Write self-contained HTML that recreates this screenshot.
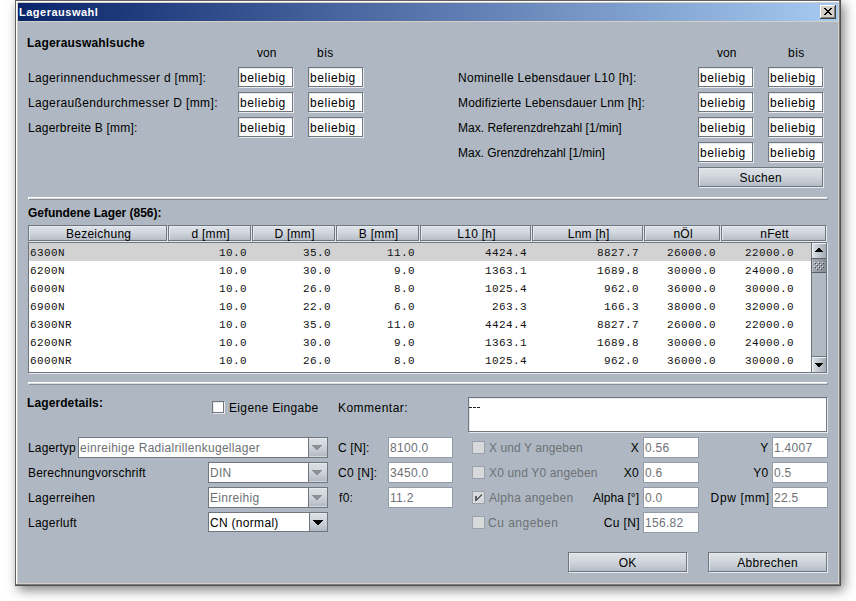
<!DOCTYPE html><html><head><meta charset="utf-8"><style>
html,body{margin:0;padding:0;background:#fff;width:856px;height:601px;overflow:hidden}
div{position:absolute;box-sizing:border-box}
svg{position:absolute}
</style></head><body>
<div style="left:15px;top:0px;width:826px;height:586px;box-shadow:3px 4px 11px rgba(0,0,0,0.5);background:#404040;"></div>
<div style="left:15px;top:0px;width:826px;height:586px;background:#505050;"></div>
<div style="left:15px;top:0px;width:825px;height:585px;background:#606060;"></div>
<div style="left:16px;top:1px;width:824px;height:584px;background:#7c7c7c;"></div>
<div style="left:16px;top:1px;width:823px;height:583px;background:#ffffff;"></div>
<div style="left:17px;top:2px;width:822px;height:582px;background:#d4d0c8;"></div>
<div style="left:18px;top:3px;width:820px;height:18px;background:linear-gradient(to right,#0a246a,#a6caf0);"></div>
<div style="left:19px;top:5px;font-family:'Liberation Sans', sans-serif;font-size:11px;font-weight:bold;line-height:15px;color:#fff;white-space:pre;letter-spacing:0.5px">Lagerauswahl</div>
<div style="left:820px;top:5px;width:16px;height:14px;background:#404040;"></div>
<div style="left:820px;top:5px;width:15px;height:13px;background:#ffffff;"></div>
<div style="left:821px;top:6px;width:14px;height:12px;background:#808080;"></div>
<div style="left:821px;top:6px;width:13px;height:11px;background:#d4d0c8;"></div>
<svg style="left:824px;top:8px" width="8" height="7" viewBox="0 0 8 7" shape-rendering="crispEdges"><path d="M0 0h2v1h-2zM6 0h2v1h-2zM1 1h2v1h-2zM5 1h2v1h-2zM2 2h4v1h-4zM3 3h2v1h-2zM2 4h4v1h-4zM1 5h2v1h-2zM5 5h2v1h-2zM0 6h2v1h-2zM6 6h2v1h-2z" fill="#000"/></svg>
<div style="left:18px;top:22px;width:820px;height:561px;background:#afb8c2;"></div>
<div style="left:27px;top:36px;font-family:'Liberation Sans', sans-serif;font-size:12px;line-height:15px;color:#000;white-space:pre;font-weight:bold;letter-spacing:0.19px;">Lagerauswahlsuche</div>
<div style="left:257px;top:46px;font-family:'Liberation Sans', sans-serif;font-size:12px;line-height:15px;color:#000;white-space:pre;letter-spacing:0.1px;">von</div>
<div style="left:317px;top:46px;font-family:'Liberation Sans', sans-serif;font-size:12px;line-height:15px;color:#000;white-space:pre;letter-spacing:0.5px;">bis</div>
<div style="left:717px;top:46px;font-family:'Liberation Sans', sans-serif;font-size:12px;line-height:15px;color:#000;white-space:pre;letter-spacing:0.1px;">von</div>
<div style="left:788px;top:46px;font-family:'Liberation Sans', sans-serif;font-size:12px;line-height:15px;color:#000;white-space:pre;letter-spacing:0.5px;">bis</div>
<div style="left:28px;top:71px;font-family:'Liberation Sans', sans-serif;font-size:12px;line-height:15px;color:#000;white-space:pre;letter-spacing:0.34px;">Lagerinnenduchmesser d [mm]:</div>
<div style="left:239px;top:68px;width:55px;height:20px;border:1px solid #e6e9ed;background:#fff;"></div>
<div style="left:238px;top:67px;width:55px;height:20px;border:1px solid #6f767e;"></div>
<div style="left:240px;top:71px;font-family:'Liberation Sans', sans-serif;font-size:12px;line-height:15px;color:#000;white-space:pre;letter-spacing:0.56px;">beliebig</div>
<div style="left:309px;top:68px;width:55px;height:20px;border:1px solid #e6e9ed;background:#fff;"></div>
<div style="left:308px;top:67px;width:55px;height:20px;border:1px solid #6f767e;"></div>
<div style="left:310px;top:71px;font-family:'Liberation Sans', sans-serif;font-size:12px;line-height:15px;color:#000;white-space:pre;letter-spacing:0.56px;">beliebig</div>
<div style="left:28px;top:96px;font-family:'Liberation Sans', sans-serif;font-size:12px;line-height:15px;color:#000;white-space:pre;letter-spacing:0.36px;">Lageraußendurchmesser D [mm]:</div>
<div style="left:239px;top:93px;width:55px;height:20px;border:1px solid #e6e9ed;background:#fff;"></div>
<div style="left:238px;top:92px;width:55px;height:20px;border:1px solid #6f767e;"></div>
<div style="left:240px;top:96px;font-family:'Liberation Sans', sans-serif;font-size:12px;line-height:15px;color:#000;white-space:pre;letter-spacing:0.56px;">beliebig</div>
<div style="left:309px;top:93px;width:55px;height:20px;border:1px solid #e6e9ed;background:#fff;"></div>
<div style="left:308px;top:92px;width:55px;height:20px;border:1px solid #6f767e;"></div>
<div style="left:310px;top:96px;font-family:'Liberation Sans', sans-serif;font-size:12px;line-height:15px;color:#000;white-space:pre;letter-spacing:0.56px;">beliebig</div>
<div style="left:28px;top:121px;font-family:'Liberation Sans', sans-serif;font-size:12px;line-height:15px;color:#000;white-space:pre;letter-spacing:0.22px;">Lagerbreite B [mm]:</div>
<div style="left:239px;top:118px;width:55px;height:20px;border:1px solid #e6e9ed;background:#fff;"></div>
<div style="left:238px;top:117px;width:55px;height:20px;border:1px solid #6f767e;"></div>
<div style="left:240px;top:121px;font-family:'Liberation Sans', sans-serif;font-size:12px;line-height:15px;color:#000;white-space:pre;letter-spacing:0.56px;">beliebig</div>
<div style="left:309px;top:118px;width:55px;height:20px;border:1px solid #e6e9ed;background:#fff;"></div>
<div style="left:308px;top:117px;width:55px;height:20px;border:1px solid #6f767e;"></div>
<div style="left:310px;top:121px;font-family:'Liberation Sans', sans-serif;font-size:12px;line-height:15px;color:#000;white-space:pre;letter-spacing:0.56px;">beliebig</div>
<div style="left:458px;top:71px;font-family:'Liberation Sans', sans-serif;font-size:12px;line-height:15px;color:#000;white-space:pre;letter-spacing:0.28px;">Nominelle Lebensdauer L10 [h]:</div>
<div style="left:699px;top:68px;width:55px;height:20px;border:1px solid #e6e9ed;background:#fff;"></div>
<div style="left:698px;top:67px;width:55px;height:20px;border:1px solid #6f767e;"></div>
<div style="left:700px;top:71px;font-family:'Liberation Sans', sans-serif;font-size:12px;line-height:15px;color:#000;white-space:pre;letter-spacing:0.56px;">beliebig</div>
<div style="left:769px;top:68px;width:55px;height:20px;border:1px solid #e6e9ed;background:#fff;"></div>
<div style="left:768px;top:67px;width:55px;height:20px;border:1px solid #6f767e;"></div>
<div style="left:770px;top:71px;font-family:'Liberation Sans', sans-serif;font-size:12px;line-height:15px;color:#000;white-space:pre;letter-spacing:0.56px;">beliebig</div>
<div style="left:458px;top:96px;font-family:'Liberation Sans', sans-serif;font-size:12px;line-height:15px;color:#000;white-space:pre;letter-spacing:0.17px;">Modifizierte Lebensdauer Lnm [h]:</div>
<div style="left:699px;top:93px;width:55px;height:20px;border:1px solid #e6e9ed;background:#fff;"></div>
<div style="left:698px;top:92px;width:55px;height:20px;border:1px solid #6f767e;"></div>
<div style="left:700px;top:96px;font-family:'Liberation Sans', sans-serif;font-size:12px;line-height:15px;color:#000;white-space:pre;letter-spacing:0.56px;">beliebig</div>
<div style="left:769px;top:93px;width:55px;height:20px;border:1px solid #e6e9ed;background:#fff;"></div>
<div style="left:768px;top:92px;width:55px;height:20px;border:1px solid #6f767e;"></div>
<div style="left:770px;top:96px;font-family:'Liberation Sans', sans-serif;font-size:12px;line-height:15px;color:#000;white-space:pre;letter-spacing:0.56px;">beliebig</div>
<div style="left:458px;top:121px;font-family:'Liberation Sans', sans-serif;font-size:12px;line-height:15px;color:#000;white-space:pre;letter-spacing:0.01px;">Max. Referenzdrehzahl [1/min]</div>
<div style="left:699px;top:118px;width:55px;height:20px;border:1px solid #e6e9ed;background:#fff;"></div>
<div style="left:698px;top:117px;width:55px;height:20px;border:1px solid #6f767e;"></div>
<div style="left:700px;top:121px;font-family:'Liberation Sans', sans-serif;font-size:12px;line-height:15px;color:#000;white-space:pre;letter-spacing:0.56px;">beliebig</div>
<div style="left:769px;top:118px;width:55px;height:20px;border:1px solid #e6e9ed;background:#fff;"></div>
<div style="left:768px;top:117px;width:55px;height:20px;border:1px solid #6f767e;"></div>
<div style="left:770px;top:121px;font-family:'Liberation Sans', sans-serif;font-size:12px;line-height:15px;color:#000;white-space:pre;letter-spacing:0.56px;">beliebig</div>
<div style="left:458px;top:146px;font-family:'Liberation Sans', sans-serif;font-size:12px;line-height:15px;color:#000;white-space:pre;letter-spacing:-0.02px;">Max. Grenzdrehzahl [1/min]</div>
<div style="left:699px;top:143px;width:55px;height:20px;border:1px solid #e6e9ed;background:#fff;"></div>
<div style="left:698px;top:142px;width:55px;height:20px;border:1px solid #6f767e;"></div>
<div style="left:700px;top:146px;font-family:'Liberation Sans', sans-serif;font-size:12px;line-height:15px;color:#000;white-space:pre;letter-spacing:0.56px;">beliebig</div>
<div style="left:769px;top:143px;width:55px;height:20px;border:1px solid #e6e9ed;background:#fff;"></div>
<div style="left:768px;top:142px;width:55px;height:20px;border:1px solid #6f767e;"></div>
<div style="left:770px;top:146px;font-family:'Liberation Sans', sans-serif;font-size:12px;line-height:15px;color:#000;white-space:pre;letter-spacing:0.56px;">beliebig</div>
<div style="left:699px;top:168px;width:125px;height:20px;border:1px solid #e6e9ed;background:linear-gradient(#dce1e7,#d2d8de 35%,#c2c9d1 70%,#b0b7c0);"></div>
<div style="left:698px;top:167px;width:125px;height:20px;border:1px solid #6f767e;"></div>
<div style="left:698px;top:171px;width:125px;text-align:center;font-family:'Liberation Sans', sans-serif;font-size:12px;line-height:15px;color:#000;white-space:pre;letter-spacing:0.3px;text-indent:0.3px;">Suchen</div>
<div style="left:28px;top:197px;width:800px;height:3px;background:#d9dee3;border-top:1px solid #fff;border-left:1px solid #fff;border-bottom:1px solid #868d95;border-right:1px solid #868d95;"></div>
<div style="left:28px;top:206px;font-family:'Liberation Sans', sans-serif;font-size:12px;line-height:15px;color:#000;white-space:pre;font-weight:bold;letter-spacing:-0.03px;">Gefundene Lager (856):</div>
<div style="left:29px;top:243px;width:799px;height:131px;background:#e6e9ed;"></div>
<div style="left:28px;top:242px;width:799px;height:131px;background:#6f767e;"></div>
<div style="left:29px;top:226px;width:139px;height:16px;border:1px solid #e6e9ed;background:linear-gradient(#dce1e7,#d2d8de 35%,#c2c9d1 70%,#b0b7c0);"></div>
<div style="left:28px;top:225px;width:139px;height:16px;border:1px solid #6f767e;"></div>
<div style="left:29px;top:227px;width:139px;text-align:center;font-family:'Liberation Sans', sans-serif;font-size:12px;line-height:15px;color:#000;white-space:pre;letter-spacing:0.26px;text-indent:0.26px;">Bezeichung</div>
<div style="left:169px;top:226px;width:83px;height:16px;border:1px solid #e6e9ed;background:linear-gradient(#dce1e7,#d2d8de 35%,#c2c9d1 70%,#b0b7c0);"></div>
<div style="left:168px;top:225px;width:83px;height:16px;border:1px solid #6f767e;"></div>
<div style="left:169px;top:227px;width:83px;text-align:center;font-family:'Liberation Sans', sans-serif;font-size:12px;line-height:15px;color:#000;white-space:pre;letter-spacing:0.26px;text-indent:0.26px;">d [mm]</div>
<div style="left:253px;top:226px;width:83px;height:16px;border:1px solid #e6e9ed;background:linear-gradient(#dce1e7,#d2d8de 35%,#c2c9d1 70%,#b0b7c0);"></div>
<div style="left:252px;top:225px;width:83px;height:16px;border:1px solid #6f767e;"></div>
<div style="left:253px;top:227px;width:83px;text-align:center;font-family:'Liberation Sans', sans-serif;font-size:12px;line-height:15px;color:#000;white-space:pre;letter-spacing:0.26px;text-indent:0.26px;">D [mm]</div>
<div style="left:337px;top:226px;width:83px;height:16px;border:1px solid #e6e9ed;background:linear-gradient(#dce1e7,#d2d8de 35%,#c2c9d1 70%,#b0b7c0);"></div>
<div style="left:336px;top:225px;width:83px;height:16px;border:1px solid #6f767e;"></div>
<div style="left:337px;top:227px;width:83px;text-align:center;font-family:'Liberation Sans', sans-serif;font-size:12px;line-height:15px;color:#000;white-space:pre;letter-spacing:0.26px;text-indent:0.26px;">B [mm]</div>
<div style="left:421px;top:226px;width:111px;height:16px;border:1px solid #e6e9ed;background:linear-gradient(#dce1e7,#d2d8de 35%,#c2c9d1 70%,#b0b7c0);"></div>
<div style="left:420px;top:225px;width:111px;height:16px;border:1px solid #6f767e;"></div>
<div style="left:421px;top:227px;width:111px;text-align:center;font-family:'Liberation Sans', sans-serif;font-size:12px;line-height:15px;color:#000;white-space:pre;letter-spacing:0.26px;text-indent:0.26px;">L10 [h]</div>
<div style="left:533px;top:226px;width:111px;height:16px;border:1px solid #e6e9ed;background:linear-gradient(#dce1e7,#d2d8de 35%,#c2c9d1 70%,#b0b7c0);"></div>
<div style="left:532px;top:225px;width:111px;height:16px;border:1px solid #6f767e;"></div>
<div style="left:533px;top:227px;width:111px;text-align:center;font-family:'Liberation Sans', sans-serif;font-size:12px;line-height:15px;color:#000;white-space:pre;letter-spacing:0.26px;text-indent:0.26px;">Lnm [h]</div>
<div style="left:645px;top:226px;width:76px;height:16px;border:1px solid #e6e9ed;background:linear-gradient(#dce1e7,#d2d8de 35%,#c2c9d1 70%,#b0b7c0);"></div>
<div style="left:644px;top:225px;width:76px;height:16px;border:1px solid #6f767e;"></div>
<div style="left:645px;top:227px;width:76px;text-align:center;font-family:'Liberation Sans', sans-serif;font-size:12px;line-height:15px;color:#000;white-space:pre;letter-spacing:0.26px;text-indent:0.26px;">nÖl</div>
<div style="left:722px;top:226px;width:105px;height:16px;border:1px solid #e6e9ed;background:linear-gradient(#dce1e7,#d2d8de 35%,#c2c9d1 70%,#b0b7c0);"></div>
<div style="left:721px;top:225px;width:105px;height:16px;border:1px solid #6f767e;"></div>
<div style="left:722px;top:227px;width:105px;text-align:center;font-family:'Liberation Sans', sans-serif;font-size:12px;line-height:15px;color:#000;white-space:pre;letter-spacing:0.26px;text-indent:0.26px;">nFett</div>
<div style="left:29px;top:243px;width:782px;height:129px;background:#fff;"></div>
<div style="left:29px;top:243px;width:782px;height:18px;background:#d2d2d2;"></div>
<div style="left:30px;top:247px;width:35px;font-family:'Liberation Mono', monospace;font-size:11px;letter-spacing:0.4px;line-height:13px;color:#111;white-space:pre;">6300N</div>
<div style="left:219px;top:247px;width:28px;font-family:'Liberation Mono', monospace;font-size:11px;letter-spacing:0.4px;line-height:13px;color:#111;white-space:pre;">10.0</div>
<div style="left:303px;top:247px;width:28px;font-family:'Liberation Mono', monospace;font-size:11px;letter-spacing:0.4px;line-height:13px;color:#111;white-space:pre;">35.0</div>
<div style="left:387px;top:247px;width:28px;font-family:'Liberation Mono', monospace;font-size:11px;letter-spacing:0.4px;line-height:13px;color:#111;white-space:pre;">11.0</div>
<div style="left:485px;top:247px;width:42px;font-family:'Liberation Mono', monospace;font-size:11px;letter-spacing:0.4px;line-height:13px;color:#111;white-space:pre;">4424.4</div>
<div style="left:597px;top:247px;width:42px;font-family:'Liberation Mono', monospace;font-size:11px;letter-spacing:0.4px;line-height:13px;color:#111;white-space:pre;">8827.7</div>
<div style="left:667px;top:247px;width:49px;font-family:'Liberation Mono', monospace;font-size:11px;letter-spacing:0.4px;line-height:13px;color:#111;white-space:pre;">26000.0</div>
<div style="left:745px;top:247px;width:49px;font-family:'Liberation Mono', monospace;font-size:11px;letter-spacing:0.4px;line-height:13px;color:#111;white-space:pre;">22000.0</div>
<div style="left:30px;top:265px;width:35px;font-family:'Liberation Mono', monospace;font-size:11px;letter-spacing:0.4px;line-height:13px;color:#111;white-space:pre;">6200N</div>
<div style="left:219px;top:265px;width:28px;font-family:'Liberation Mono', monospace;font-size:11px;letter-spacing:0.4px;line-height:13px;color:#111;white-space:pre;">10.0</div>
<div style="left:303px;top:265px;width:28px;font-family:'Liberation Mono', monospace;font-size:11px;letter-spacing:0.4px;line-height:13px;color:#111;white-space:pre;">30.0</div>
<div style="left:394px;top:265px;width:21px;font-family:'Liberation Mono', monospace;font-size:11px;letter-spacing:0.4px;line-height:13px;color:#111;white-space:pre;">9.0</div>
<div style="left:485px;top:265px;width:42px;font-family:'Liberation Mono', monospace;font-size:11px;letter-spacing:0.4px;line-height:13px;color:#111;white-space:pre;">1363.1</div>
<div style="left:597px;top:265px;width:42px;font-family:'Liberation Mono', monospace;font-size:11px;letter-spacing:0.4px;line-height:13px;color:#111;white-space:pre;">1689.8</div>
<div style="left:667px;top:265px;width:49px;font-family:'Liberation Mono', monospace;font-size:11px;letter-spacing:0.4px;line-height:13px;color:#111;white-space:pre;">30000.0</div>
<div style="left:745px;top:265px;width:49px;font-family:'Liberation Mono', monospace;font-size:11px;letter-spacing:0.4px;line-height:13px;color:#111;white-space:pre;">24000.0</div>
<div style="left:30px;top:283px;width:35px;font-family:'Liberation Mono', monospace;font-size:11px;letter-spacing:0.4px;line-height:13px;color:#111;white-space:pre;">6000N</div>
<div style="left:219px;top:283px;width:28px;font-family:'Liberation Mono', monospace;font-size:11px;letter-spacing:0.4px;line-height:13px;color:#111;white-space:pre;">10.0</div>
<div style="left:303px;top:283px;width:28px;font-family:'Liberation Mono', monospace;font-size:11px;letter-spacing:0.4px;line-height:13px;color:#111;white-space:pre;">26.0</div>
<div style="left:394px;top:283px;width:21px;font-family:'Liberation Mono', monospace;font-size:11px;letter-spacing:0.4px;line-height:13px;color:#111;white-space:pre;">8.0</div>
<div style="left:485px;top:283px;width:42px;font-family:'Liberation Mono', monospace;font-size:11px;letter-spacing:0.4px;line-height:13px;color:#111;white-space:pre;">1025.4</div>
<div style="left:604px;top:283px;width:35px;font-family:'Liberation Mono', monospace;font-size:11px;letter-spacing:0.4px;line-height:13px;color:#111;white-space:pre;">962.0</div>
<div style="left:667px;top:283px;width:49px;font-family:'Liberation Mono', monospace;font-size:11px;letter-spacing:0.4px;line-height:13px;color:#111;white-space:pre;">36000.0</div>
<div style="left:745px;top:283px;width:49px;font-family:'Liberation Mono', monospace;font-size:11px;letter-spacing:0.4px;line-height:13px;color:#111;white-space:pre;">30000.0</div>
<div style="left:30px;top:301px;width:35px;font-family:'Liberation Mono', monospace;font-size:11px;letter-spacing:0.4px;line-height:13px;color:#111;white-space:pre;">6900N</div>
<div style="left:219px;top:301px;width:28px;font-family:'Liberation Mono', monospace;font-size:11px;letter-spacing:0.4px;line-height:13px;color:#111;white-space:pre;">10.0</div>
<div style="left:303px;top:301px;width:28px;font-family:'Liberation Mono', monospace;font-size:11px;letter-spacing:0.4px;line-height:13px;color:#111;white-space:pre;">22.0</div>
<div style="left:394px;top:301px;width:21px;font-family:'Liberation Mono', monospace;font-size:11px;letter-spacing:0.4px;line-height:13px;color:#111;white-space:pre;">6.0</div>
<div style="left:492px;top:301px;width:35px;font-family:'Liberation Mono', monospace;font-size:11px;letter-spacing:0.4px;line-height:13px;color:#111;white-space:pre;">263.3</div>
<div style="left:604px;top:301px;width:35px;font-family:'Liberation Mono', monospace;font-size:11px;letter-spacing:0.4px;line-height:13px;color:#111;white-space:pre;">166.3</div>
<div style="left:667px;top:301px;width:49px;font-family:'Liberation Mono', monospace;font-size:11px;letter-spacing:0.4px;line-height:13px;color:#111;white-space:pre;">38000.0</div>
<div style="left:745px;top:301px;width:49px;font-family:'Liberation Mono', monospace;font-size:11px;letter-spacing:0.4px;line-height:13px;color:#111;white-space:pre;">32000.0</div>
<div style="left:30px;top:319px;width:42px;font-family:'Liberation Mono', monospace;font-size:11px;letter-spacing:0.4px;line-height:13px;color:#111;white-space:pre;">6300NR</div>
<div style="left:219px;top:319px;width:28px;font-family:'Liberation Mono', monospace;font-size:11px;letter-spacing:0.4px;line-height:13px;color:#111;white-space:pre;">10.0</div>
<div style="left:303px;top:319px;width:28px;font-family:'Liberation Mono', monospace;font-size:11px;letter-spacing:0.4px;line-height:13px;color:#111;white-space:pre;">35.0</div>
<div style="left:387px;top:319px;width:28px;font-family:'Liberation Mono', monospace;font-size:11px;letter-spacing:0.4px;line-height:13px;color:#111;white-space:pre;">11.0</div>
<div style="left:485px;top:319px;width:42px;font-family:'Liberation Mono', monospace;font-size:11px;letter-spacing:0.4px;line-height:13px;color:#111;white-space:pre;">4424.4</div>
<div style="left:597px;top:319px;width:42px;font-family:'Liberation Mono', monospace;font-size:11px;letter-spacing:0.4px;line-height:13px;color:#111;white-space:pre;">8827.7</div>
<div style="left:667px;top:319px;width:49px;font-family:'Liberation Mono', monospace;font-size:11px;letter-spacing:0.4px;line-height:13px;color:#111;white-space:pre;">26000.0</div>
<div style="left:745px;top:319px;width:49px;font-family:'Liberation Mono', monospace;font-size:11px;letter-spacing:0.4px;line-height:13px;color:#111;white-space:pre;">22000.0</div>
<div style="left:30px;top:337px;width:42px;font-family:'Liberation Mono', monospace;font-size:11px;letter-spacing:0.4px;line-height:13px;color:#111;white-space:pre;">6200NR</div>
<div style="left:219px;top:337px;width:28px;font-family:'Liberation Mono', monospace;font-size:11px;letter-spacing:0.4px;line-height:13px;color:#111;white-space:pre;">10.0</div>
<div style="left:303px;top:337px;width:28px;font-family:'Liberation Mono', monospace;font-size:11px;letter-spacing:0.4px;line-height:13px;color:#111;white-space:pre;">30.0</div>
<div style="left:394px;top:337px;width:21px;font-family:'Liberation Mono', monospace;font-size:11px;letter-spacing:0.4px;line-height:13px;color:#111;white-space:pre;">9.0</div>
<div style="left:485px;top:337px;width:42px;font-family:'Liberation Mono', monospace;font-size:11px;letter-spacing:0.4px;line-height:13px;color:#111;white-space:pre;">1363.1</div>
<div style="left:597px;top:337px;width:42px;font-family:'Liberation Mono', monospace;font-size:11px;letter-spacing:0.4px;line-height:13px;color:#111;white-space:pre;">1689.8</div>
<div style="left:667px;top:337px;width:49px;font-family:'Liberation Mono', monospace;font-size:11px;letter-spacing:0.4px;line-height:13px;color:#111;white-space:pre;">30000.0</div>
<div style="left:745px;top:337px;width:49px;font-family:'Liberation Mono', monospace;font-size:11px;letter-spacing:0.4px;line-height:13px;color:#111;white-space:pre;">24000.0</div>
<div style="left:30px;top:355px;width:42px;font-family:'Liberation Mono', monospace;font-size:11px;letter-spacing:0.4px;line-height:13px;color:#111;white-space:pre;">6000NR</div>
<div style="left:219px;top:355px;width:28px;font-family:'Liberation Mono', monospace;font-size:11px;letter-spacing:0.4px;line-height:13px;color:#111;white-space:pre;">10.0</div>
<div style="left:303px;top:355px;width:28px;font-family:'Liberation Mono', monospace;font-size:11px;letter-spacing:0.4px;line-height:13px;color:#111;white-space:pre;">26.0</div>
<div style="left:394px;top:355px;width:21px;font-family:'Liberation Mono', monospace;font-size:11px;letter-spacing:0.4px;line-height:13px;color:#111;white-space:pre;">8.0</div>
<div style="left:485px;top:355px;width:42px;font-family:'Liberation Mono', monospace;font-size:11px;letter-spacing:0.4px;line-height:13px;color:#111;white-space:pre;">1025.4</div>
<div style="left:604px;top:355px;width:35px;font-family:'Liberation Mono', monospace;font-size:11px;letter-spacing:0.4px;line-height:13px;color:#111;white-space:pre;">962.0</div>
<div style="left:667px;top:355px;width:49px;font-family:'Liberation Mono', monospace;font-size:11px;letter-spacing:0.4px;line-height:13px;color:#111;white-space:pre;">36000.0</div>
<div style="left:745px;top:355px;width:49px;font-family:'Liberation Mono', monospace;font-size:11px;letter-spacing:0.4px;line-height:13px;color:#111;white-space:pre;">30000.0</div>
<div style="left:811px;top:243px;width:15px;height:129px;background:#b1b9c2;"></div>
<div style="left:811px;top:243px;width:1px;height:129px;background:#6f767e;"></div>
<div style="left:812px;top:243px;width:14px;height:15px;background:linear-gradient(to right,#d9dee4,#a3abb4);border-top:1px solid #eef1f4;border-left:1px solid #eef1f4;"></div>
<svg style="left:815px;top:248px" width="8" height="4" shape-rendering="crispEdges"><path d="M3 0h2v1h-2zM2 1h4v1h-4zM1 2h6v1h-6zM0 3h8v1h-8z" fill="#000"/></svg>
<div style="left:811px;top:258px;width:15px;height:15px;background:linear-gradient(to right,#a3aab2,#868d95);border:1px solid #5a6068;border-right:none;"></div>
<div style="left:812px;top:259px;width:1px;height:13px;background:#b9bfc5;"></div>
<div style="left:814px;top:262px;width:1px;height:1px;background:#eef1f3"></div><div style="left:815px;top:263px;width:1px;height:1px;background:#3f454b"></div><div style="left:818px;top:262px;width:1px;height:1px;background:#eef1f3"></div><div style="left:819px;top:263px;width:1px;height:1px;background:#3f454b"></div><div style="left:822px;top:262px;width:1px;height:1px;background:#eef1f3"></div><div style="left:823px;top:263px;width:1px;height:1px;background:#3f454b"></div><div style="left:816px;top:264px;width:1px;height:1px;background:#eef1f3"></div><div style="left:817px;top:265px;width:1px;height:1px;background:#3f454b"></div><div style="left:820px;top:264px;width:1px;height:1px;background:#eef1f3"></div><div style="left:821px;top:265px;width:1px;height:1px;background:#3f454b"></div><div style="left:814px;top:266px;width:1px;height:1px;background:#eef1f3"></div><div style="left:815px;top:267px;width:1px;height:1px;background:#3f454b"></div><div style="left:818px;top:266px;width:1px;height:1px;background:#eef1f3"></div><div style="left:819px;top:267px;width:1px;height:1px;background:#3f454b"></div><div style="left:822px;top:266px;width:1px;height:1px;background:#eef1f3"></div><div style="left:823px;top:267px;width:1px;height:1px;background:#3f454b"></div><div style="left:816px;top:268px;width:1px;height:1px;background:#eef1f3"></div><div style="left:817px;top:269px;width:1px;height:1px;background:#3f454b"></div><div style="left:820px;top:268px;width:1px;height:1px;background:#eef1f3"></div><div style="left:821px;top:269px;width:1px;height:1px;background:#3f454b"></div>
<div style="left:811px;top:356px;width:15px;height:1px;background:#6f767e;"></div>
<div style="left:812px;top:357px;width:14px;height:15px;background:linear-gradient(to right,#d9dee4,#a3abb4);border-top:1px solid #eef1f4;border-left:1px solid #eef1f4;"></div>
<svg style="left:815px;top:363px" width="8" height="4" shape-rendering="crispEdges"><path d="M0 0h8v1h-8zM1 1h6v1h-6zM2 2h4v1h-4zM3 3h2v1h-2z" fill="#000"/></svg>
<div style="left:28px;top:382px;width:800px;height:3px;background:#d9dee3;border-top:1px solid #fff;border-left:1px solid #fff;border-bottom:1px solid #868d95;border-right:1px solid #868d95;"></div>
<div style="left:27px;top:396px;font-family:'Liberation Sans', sans-serif;font-size:12px;line-height:15px;color:#000;white-space:pre;font-weight:bold;letter-spacing:0.1px;">Lagerdetails:</div>
<div style="left:213px;top:402px;width:12px;height:12px;border:1px solid #e6e9ed;background:#fff;"></div>
<div style="left:212px;top:401px;width:12px;height:12px;border:1px solid #6f767e;"></div>
<div style="left:229px;top:401px;font-family:'Liberation Sans', sans-serif;font-size:12px;line-height:15px;color:#000;white-space:pre;letter-spacing:0.35px;">Eigene Eingabe</div>
<div style="left:338px;top:401px;font-family:'Liberation Sans', sans-serif;font-size:12px;line-height:15px;color:#000;white-space:pre;letter-spacing:0.47px;">Kommentar:</div>
<div style="left:469px;top:398px;width:359px;height:35px;border:1px solid #e6e9ed;background:#fff;"></div>
<div style="left:468px;top:397px;width:359px;height:35px;border:1px solid #6f767e;"></div>
<div style="left:469px;top:407px;width:3px;height:1px;background:#222"></div><div style="left:473px;top:407px;width:3px;height:1px;background:#222"></div><div style="left:477px;top:407px;width:3px;height:1px;background:#222"></div>
<div style="left:28px;top:441px;font-family:'Liberation Sans', sans-serif;font-size:12px;line-height:15px;color:#000;white-space:pre;letter-spacing:0.14px;">Lagertyp</div>
<div style="left:28px;top:466px;font-family:'Liberation Sans', sans-serif;font-size:12px;line-height:15px;color:#000;white-space:pre;letter-spacing:0.22px;">Berechnungvorschrift</div>
<div style="left:28px;top:491px;font-family:'Liberation Sans', sans-serif;font-size:12px;line-height:15px;color:#000;white-space:pre;letter-spacing:0.3px;">Lagerreihen</div>
<div style="left:28px;top:516px;font-family:'Liberation Sans', sans-serif;font-size:12px;line-height:15px;color:#000;white-space:pre;letter-spacing:0.25px;">Lagerluft</div>
<div style="left:78px;top:437px;width:250px;height:21px;border:1px solid #6f767e;background:#fff;"></div>
<div style="left:308px;top:437px;width:20px;height:21px;border:1px solid #6f767e;background:linear-gradient(#dce1e7,#d2d8de 35%,#c2c9d1 70%,#b0b7c0);"></div>
<div style="left:309px;top:438px;width:18px;height:1px;background:#e6e9ed;"></div>
<div style="left:309px;top:456px;width:18px;height:1px;background:#d3d8de;"></div>
<svg style="left:312px;top:445px" width="10" height="6" shape-rendering="crispEdges"><path d="M0 0H10V1H9V2H8V3H7V4H6V5H4V4H3V3H2V2H1V1H0z" fill="#8a9096"/></svg>
<div style="left:80px;top:441px;font-family:'Liberation Sans', sans-serif;font-size:12px;line-height:15px;color:#6d7175;white-space:pre;letter-spacing:0.3px;">einreihige Radialrillenkugellager</div>
<div style="left:208px;top:462px;width:120px;height:21px;border:1px solid #6f767e;background:#fff;"></div>
<div style="left:308px;top:462px;width:20px;height:21px;border:1px solid #6f767e;background:linear-gradient(#dce1e7,#d2d8de 35%,#c2c9d1 70%,#b0b7c0);"></div>
<div style="left:309px;top:463px;width:18px;height:1px;background:#e6e9ed;"></div>
<div style="left:309px;top:481px;width:18px;height:1px;background:#d3d8de;"></div>
<svg style="left:312px;top:470px" width="10" height="6" shape-rendering="crispEdges"><path d="M0 0H10V1H9V2H8V3H7V4H6V5H4V4H3V3H2V2H1V1H0z" fill="#8a9096"/></svg>
<div style="left:210px;top:466px;font-family:'Liberation Sans', sans-serif;font-size:12px;line-height:15px;color:#6d7175;white-space:pre;letter-spacing:0.3px;">DIN</div>
<div style="left:208px;top:487px;width:120px;height:21px;border:1px solid #6f767e;background:#fff;"></div>
<div style="left:308px;top:487px;width:20px;height:21px;border:1px solid #6f767e;background:linear-gradient(#dce1e7,#d2d8de 35%,#c2c9d1 70%,#b0b7c0);"></div>
<div style="left:309px;top:488px;width:18px;height:1px;background:#e6e9ed;"></div>
<div style="left:309px;top:506px;width:18px;height:1px;background:#d3d8de;"></div>
<svg style="left:312px;top:495px" width="10" height="6" shape-rendering="crispEdges"><path d="M0 0H10V1H9V2H8V3H7V4H6V5H4V4H3V3H2V2H1V1H0z" fill="#8a9096"/></svg>
<div style="left:210px;top:491px;font-family:'Liberation Sans', sans-serif;font-size:12px;line-height:15px;color:#6d7175;white-space:pre;letter-spacing:0.3px;">Einreihig</div>
<div style="left:208px;top:512px;width:120px;height:20px;border:1px solid #6f767e;background:#fff;"></div>
<div style="left:309px;top:512px;width:19px;height:20px;border:1px solid #6f767e;background:linear-gradient(#dce1e7,#d2d8de 35%,#c2c9d1 70%,#b0b7c0);"></div>
<div style="left:310px;top:513px;width:17px;height:1px;background:#e6e9ed;"></div>
<svg style="left:313px;top:520px" width="10" height="6" shape-rendering="crispEdges"><path d="M0 0H10V1H9V2H8V3H7V4H6V5H4V4H3V3H2V2H1V1H0z" fill="#000"/></svg>
<div style="left:210px;top:516px;font-family:'Liberation Sans', sans-serif;font-size:12px;line-height:15px;color:#000;white-space:pre;letter-spacing:0.3px;">CN (normal)</div>
<div style="left:338px;top:441px;font-family:'Liberation Sans', sans-serif;font-size:12px;line-height:15px;color:#000;white-space:pre;letter-spacing:0.12px;">C [N]:</div>
<div style="left:338px;top:466px;font-family:'Liberation Sans', sans-serif;font-size:12px;line-height:15px;color:#000;white-space:pre;letter-spacing:0.3px;">C0 [N]:</div>
<div style="left:339px;top:491px;font-family:'Liberation Sans', sans-serif;font-size:12px;line-height:15px;color:#000;white-space:pre;letter-spacing:0.3px;">f0:</div>
<div style="left:388px;top:437px;width:65px;height:21px;border:1px solid #939ca6;background:#fff;"></div>
<div style="left:390px;top:441px;font-family:'Liberation Sans', sans-serif;font-size:12px;line-height:15px;color:#6d7175;white-space:pre;letter-spacing:0.3px;">8100.0</div>
<div style="left:388px;top:462px;width:65px;height:21px;border:1px solid #939ca6;background:#fff;"></div>
<div style="left:390px;top:466px;font-family:'Liberation Sans', sans-serif;font-size:12px;line-height:15px;color:#6d7175;white-space:pre;letter-spacing:0.3px;">3450.0</div>
<div style="left:388px;top:487px;width:65px;height:21px;border:1px solid #939ca6;background:#fff;"></div>
<div style="left:390px;top:491px;font-family:'Liberation Sans', sans-serif;font-size:12px;line-height:15px;color:#6d7175;white-space:pre;letter-spacing:0.3px;">11.2</div>
<div style="left:472px;top:441px;width:13px;height:13px;border:1px solid #9aa2ab;background:#d8d9da;"></div>
<div style="left:489px;top:441px;font-family:'Liberation Sans', sans-serif;font-size:12px;line-height:15px;color:#6d7175;white-space:pre;letter-spacing:0.09px;">X und Y angeben</div>
<div style="left:472px;top:466px;width:13px;height:13px;border:1px solid #9aa2ab;background:#d8d9da;"></div>
<div style="left:489px;top:466px;font-family:'Liberation Sans', sans-serif;font-size:12px;line-height:15px;color:#6d7175;white-space:pre;letter-spacing:0.16px;">X0 und Y0 angeben</div>
<div style="left:472px;top:491px;width:13px;height:13px;border:1px solid #9aa2ab;background:#d8d9da;"></div>
<div style="left:489px;top:491px;font-family:'Liberation Sans', sans-serif;font-size:12px;line-height:15px;color:#6d7175;white-space:pre;letter-spacing:0.28px;">Alpha angeben</div>
<div style="left:472px;top:516px;width:13px;height:13px;border:1px solid #9aa2ab;background:#d8d9da;"></div>
<div style="left:488px;top:516px;font-family:'Liberation Sans', sans-serif;font-size:12px;line-height:15px;color:#6d7175;white-space:pre;letter-spacing:0.49px;">Cu angeben</div>
<svg style="left:472px;top:491px" width="13" height="13" shape-rendering="crispEdges"><path d="M3 5h2v5h-2zM9 3h1v2h-1zM8 4h1v2h-1zM7 5h1v2h-1zM6 6h1v2h-1zM5 7h1v2h-1z" fill="#5c5f63"/></svg>
<div style="left:630.8px;top:441px;font-family:'Liberation Sans', sans-serif;font-size:12px;line-height:15px;color:#000;white-space:pre;">X</div>
<div style="left:643px;top:437px;width:56px;height:21px;border:1px solid #939ca6;background:#fff;"></div>
<div style="left:645px;top:441px;font-family:'Liberation Sans', sans-serif;font-size:12px;line-height:15px;color:#6d7175;white-space:pre;letter-spacing:0.3px;">0.56</div>
<div style="left:623.7px;top:466px;font-family:'Liberation Sans', sans-serif;font-size:12px;line-height:15px;color:#000;white-space:pre;letter-spacing:0.4px;">X0</div>
<div style="left:643px;top:462px;width:56px;height:21px;border:1px solid #939ca6;background:#fff;"></div>
<div style="left:645px;top:466px;font-family:'Liberation Sans', sans-serif;font-size:12px;line-height:15px;color:#6d7175;white-space:pre;letter-spacing:0.3px;">0.6</div>
<div style="left:593px;top:491px;font-family:'Liberation Sans', sans-serif;font-size:12px;line-height:15px;color:#000;white-space:pre;letter-spacing:0.06px;">Alpha [°]</div>
<div style="left:643px;top:487px;width:56px;height:21px;border:1px solid #939ca6;background:#fff;"></div>
<div style="left:645px;top:491px;font-family:'Liberation Sans', sans-serif;font-size:12px;line-height:15px;color:#6d7175;white-space:pre;letter-spacing:0.3px;">0.0</div>
<div style="left:603.7px;top:516px;font-family:'Liberation Sans', sans-serif;font-size:12px;line-height:15px;color:#000;white-space:pre;letter-spacing:0.36px;">Cu [N]</div>
<div style="left:643px;top:512px;width:56px;height:21px;border:1px solid #939ca6;background:#fff;"></div>
<div style="left:645px;top:516px;font-family:'Liberation Sans', sans-serif;font-size:12px;line-height:15px;color:#6d7175;white-space:pre;letter-spacing:0.3px;">156.82</div>
<div style="left:760.2px;top:441px;font-family:'Liberation Sans', sans-serif;font-size:12px;line-height:15px;color:#000;white-space:pre;">Y</div>
<div style="left:772px;top:437px;width:56px;height:21px;border:1px solid #939ca6;background:#fff;"></div>
<div style="left:774px;top:441px;font-family:'Liberation Sans', sans-serif;font-size:12px;line-height:15px;color:#6d7175;white-space:pre;letter-spacing:0.3px;">1.4007</div>
<div style="left:753.2px;top:466px;font-family:'Liberation Sans', sans-serif;font-size:12px;line-height:15px;color:#000;white-space:pre;letter-spacing:0.4px;">Y0</div>
<div style="left:772px;top:462px;width:56px;height:21px;border:1px solid #939ca6;background:#fff;"></div>
<div style="left:774px;top:466px;font-family:'Liberation Sans', sans-serif;font-size:12px;line-height:15px;color:#6d7175;white-space:pre;letter-spacing:0.3px;">0.5</div>
<div style="left:710.6px;top:491px;font-family:'Liberation Sans', sans-serif;font-size:12px;line-height:15px;color:#000;white-space:pre;letter-spacing:0.63px;">Dpw [mm]</div>
<div style="left:772px;top:487px;width:56px;height:21px;border:1px solid #939ca6;background:#fff;"></div>
<div style="left:774px;top:491px;font-family:'Liberation Sans', sans-serif;font-size:12px;line-height:15px;color:#6d7175;white-space:pre;letter-spacing:0.3px;">22.5</div>
<div style="left:569px;top:553px;width:119px;height:20px;border:1px solid #e6e9ed;background:linear-gradient(#dce1e7,#d2d8de 35%,#c2c9d1 70%,#b0b7c0);"></div>
<div style="left:568px;top:552px;width:119px;height:20px;border:1px solid #6f767e;"></div>
<div style="left:568px;top:556px;width:119px;text-align:center;font-family:'Liberation Sans', sans-serif;font-size:12px;line-height:15px;color:#000;white-space:pre;letter-spacing:0.3px;text-indent:0.3px;">OK</div>
<div style="left:709px;top:553px;width:119px;height:20px;border:1px solid #e6e9ed;background:linear-gradient(#dce1e7,#d2d8de 35%,#c2c9d1 70%,#b0b7c0);"></div>
<div style="left:708px;top:552px;width:119px;height:20px;border:1px solid #6f767e;"></div>
<div style="left:708px;top:556px;width:119px;text-align:center;font-family:'Liberation Sans', sans-serif;font-size:12px;line-height:15px;color:#000;white-space:pre;letter-spacing:0.3px;text-indent:0.3px;">Abbrechen</div>
</body></html>
